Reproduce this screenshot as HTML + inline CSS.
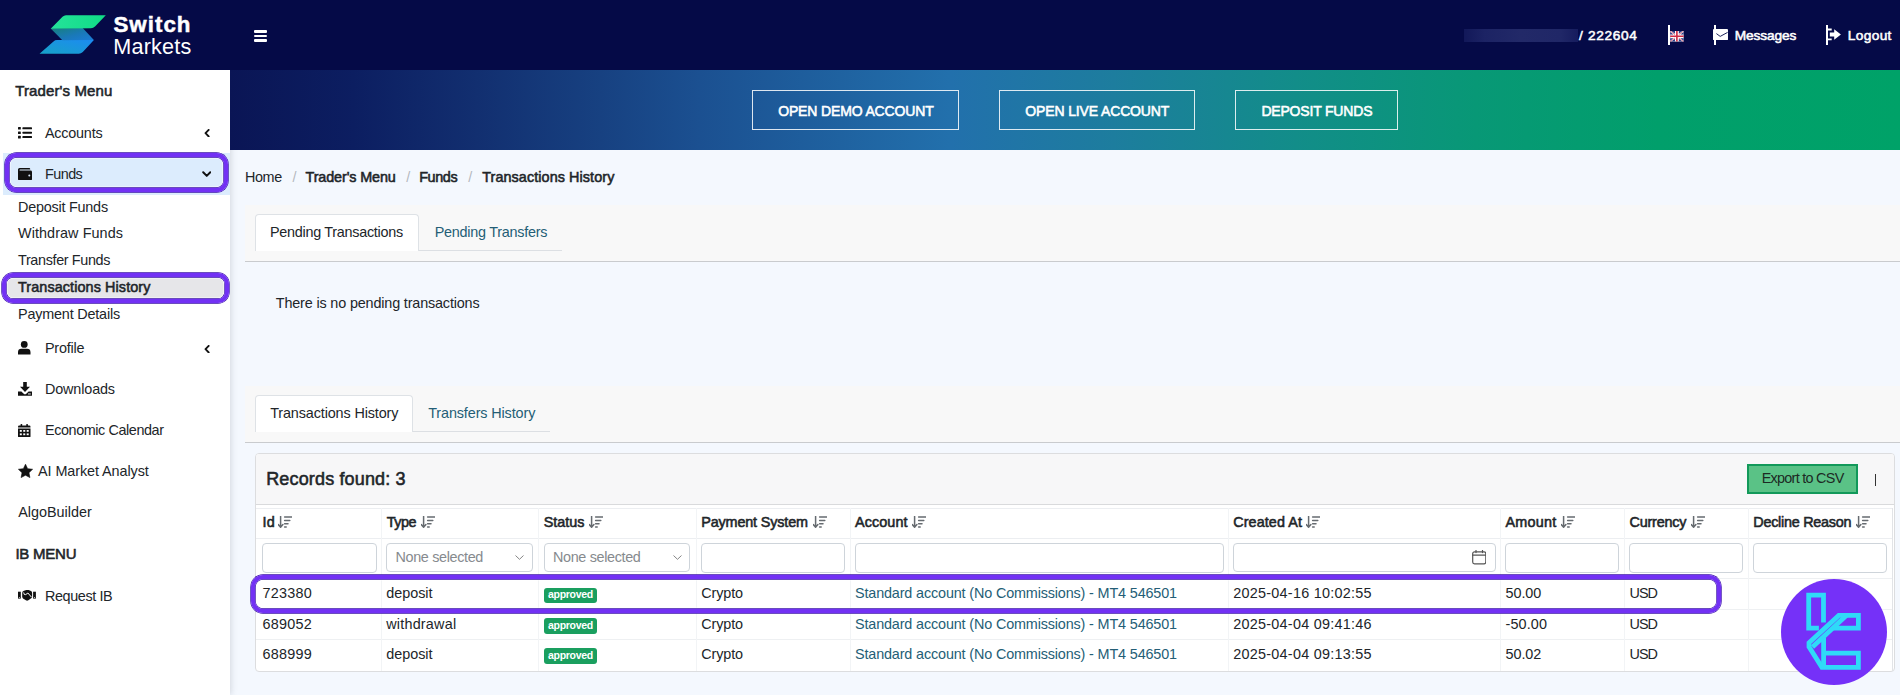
<!DOCTYPE html><html lang="en"><head><meta charset="utf-8"><title>Transactions History</title><style>
*{box-sizing:border-box;margin:0;padding:0}
html,body{width:1900px;height:695px;overflow:hidden}
body{position:relative;background:#f4f8fe;font-family:'Liberation Sans',sans-serif;color:#212529;font-size:14px}
.t{position:absolute;white-space:pre;display:block}
.abs{position:absolute}
.header{position:absolute;left:0;top:0;width:1900px;height:70px;background:#050a47}
.sidebar{position:absolute;left:0;top:70px;width:230px;height:625px;background:#fff;box-shadow:1px 0 6px rgba(90,100,110,.22)}
.banner{position:absolute;left:230px;top:70px;width:1670px;height:80px;background:linear-gradient(90deg,#0a1555 0%,#0c1e61 7.4%,#122f70 14.8%,#174181 22.2%,#1b5091 28.1%,#2270ac 43.1%,#1d7d9e 52.9%,#128d89 63.8%,#089876 74.6%,#019f6b 85.5%,#00a268 100%)}
.bbtn{position:absolute;top:20px;height:40px;border:1.5px solid rgba(255,255,255,.85)}
.hl{position:absolute;border:4.6px solid #7231f4;box-shadow:0 0 0 .7px #3a12a8,inset 0 0 0 .7px #3a12a8,inset 0 0 0 1.5px rgba(255,255,255,.8)}
.tab{position:absolute;background:#fff;border:1px solid #dee2e6;border-bottom:none;border-radius:4px 4px 0 0}
.hr{position:absolute;height:1px;background:#c9cbce}
.card{position:absolute;left:255px;top:453px;width:1640px;height:219px;background:#fff;border:1px solid #dcdddf;border-radius:4px;overflow:hidden}
.cardh{position:absolute;left:0;top:0;width:1638px;height:51px;background:#f7f7f8;border-bottom:1px solid #d9dadc}
.vl{position:absolute;width:1px;background:#f2f4f6;top:508px;height:163px}
.hl2{position:absolute;height:1px;background:#eceef1;left:256px;width:1636px}
.inp{position:absolute;background:#fff;border:1px solid #ced4da;border-radius:4px;top:543px;height:30px}
.sel{position:absolute;background:#fff;border:1px solid #ced4da;border-radius:4px;top:543px;height:28.5px}
.badge{position:absolute;background:#1a9f5f;border-radius:3px;width:53px;height:15px;left:544px}
</style></head><body>
<aside><nav>
<div class="sidebar"></div>
<span class="t" style="left:15.30px;top:82.80px;font-size:15px;line-height:15px;-webkit-text-stroke:0.55px currentColor;letter-spacing:0.105px;">Trader's Menu</span>
<svg class="abs" style="left:18px;top:127px" width="14" height="11.5" viewBox="0 0 14 11.5" ><g fill="#111"><rect x="0" y="0" width="2.8" height="2.6" rx=".5"/><rect x="0" y="4.4" width="2.8" height="2.6" rx=".5"/><rect x="0" y="8.8" width="2.8" height="2.6" rx=".5"/><rect x="4.4" y=".3" width="9.6" height="2" rx=".6"/><rect x="4.4" y="4.7" width="9.6" height="2" rx=".6"/><rect x="4.4" y="9.1" width="9.6" height="2" rx=".6"/></g></svg>
<span class="t" style="left:45.00px;top:125.80px;font-size:14.4px;line-height:14.4px;letter-spacing:-0.227px;">Accounts</span>
<svg class="abs" style="left:203.6px;top:128.8px" width="6" height="8.4" viewBox="0 0 6 9" ><path d="M4.8 1L1.4 4.5L4.8 8" fill="none" stroke="#111" stroke-width="2" stroke-linecap="round" stroke-linejoin="round"/></svg>
<div class="abs" style="left:3px;top:153.4px;width:227px;height:42px;background:#dcecfd"></div>
<div class="hl" style="left:4.9px;top:152.8px;width:223.2px;height:39.4px;border-radius:11.5px"></div>
<svg class="abs" style="left:18px;top:167.5px" width="14" height="12.5" viewBox="0 0 14 12.5" ><path d="M1.6 0H11.2Q12.2 0 12.2 1V1.6H2Q1.5 1.6 1.5 2.1Q1.5 2.6 2 2.6H12.6Q14 2.6 14 4V11Q14 12.5 12.6 12.5H1.6Q0 12.5 0 11V1.6Q0 0 1.6 0Z" fill="#111"/><circle cx="11.3" cy="7.6" r="1" fill="#dcecfd"/></svg>
<span class="t" style="left:45.00px;top:166.80px;font-size:14.4px;line-height:14.4px;letter-spacing:-0.556px;">Funds</span>
<svg class="abs" style="left:201.5px;top:170.5px" width="9.5" height="6.5" viewBox="0 0 9.5 6.5" ><path d="M1.2 1.3L4.75 4.9L8.3 1.3" fill="none" stroke="#111" stroke-width="2" stroke-linecap="round" stroke-linejoin="round"/></svg>
<span class="t" style="left:18.00px;top:199.80px;font-size:14.4px;line-height:14.4px;letter-spacing:-0.224px;">Deposit Funds</span>
<span class="t" style="left:18.00px;top:225.80px;font-size:14.4px;line-height:14.4px;letter-spacing:0.076px;">Withdraw Funds</span>
<span class="t" style="left:18.00px;top:252.80px;font-size:14.4px;line-height:14.4px;letter-spacing:-0.352px;">Transfer Funds</span>
<div class="abs" style="left:4px;top:275px;width:223px;height:26px;background:#e6e6e9;border-radius:9px"></div>
<div class="hl" style="left:1.9px;top:272.7px;width:227.4px;height:30.1px;border-radius:11px"></div>
<span class="t" style="left:18.00px;top:279.80px;font-size:14.4px;line-height:14.4px;-webkit-text-stroke:0.55px currentColor;letter-spacing:0.096px;">Transactions History</span>
<span class="t" style="left:18.00px;top:306.80px;font-size:14.4px;line-height:14.4px;letter-spacing:-0.192px;">Payment Details</span>
<svg class="abs" style="left:18px;top:341px" width="12.5" height="13.5" viewBox="0 0 12.5 13.5" ><circle cx="6.25" cy="3.4" r="3.4" fill="#111"/><path d="M0 13.5V11.2Q0 7.8 3.4 7.8H9.1Q12.5 7.8 12.5 11.2V13.5Z" fill="#111"/></svg>
<span class="t" style="left:45.00px;top:340.80px;font-size:14.4px;line-height:14.4px;letter-spacing:-0.230px;">Profile</span>
<svg class="abs" style="left:203.6px;top:344.6px" width="6" height="8.4" viewBox="0 0 6 9" ><path d="M4.8 1L1.4 4.5L4.8 8" fill="none" stroke="#111" stroke-width="2" stroke-linecap="round" stroke-linejoin="round"/></svg>
<svg class="abs" style="left:18px;top:382px" width="14" height="13.8" viewBox="0 0 14 13.8" ><path d="M5.2 0H8.8V4.8H12L7 10L2 4.8H5.2Z" fill="#111"/><path d="M0 9.4H3.4L5.7 11.7Q7 12.9 8.3 11.7L10.6 9.4H14V13.8H0Z" fill="#111"/><rect x="10" y="11.5" width="2.8" height=".9" fill="#fff"/></svg>
<span class="t" style="left:45.00px;top:381.60px;font-size:14.4px;line-height:14.4px;letter-spacing:-0.142px;">Downloads</span>
<svg class="abs" style="left:18px;top:423.7px" width="12.5" height="13.5" viewBox="0 0 12.5 13.5" ><path d="M0 4.4H12.5V12.2Q12.5 13.5 11.2 13.5H1.3Q0 13.5 0 12.2Z" fill="#111"/><path d="M0 3.6V2.8Q0 1.6 1.3 1.6H11.2Q12.5 1.6 12.5 2.8V3.6Z" fill="#111"/><rect x="2.6" y="0" width="1.6" height="2.6" rx=".5" fill="#111"/><rect x="8.3" y="0" width="1.6" height="2.6" rx=".5" fill="#111"/><g fill="#fff"><rect x="1.8" y="6" width="2" height="1.8"/><rect x="5.25" y="6" width="2" height="1.8"/><rect x="8.7" y="6" width="2" height="1.8"/><rect x="1.8" y="9.4" width="2" height="1.8"/><rect x="5.25" y="9.4" width="2" height="1.8"/><rect x="8.7" y="9.4" width="2" height="1.8"/></g></svg>
<span class="t" style="left:45.00px;top:422.80px;font-size:14.4px;line-height:14.4px;letter-spacing:-0.412px;">Economic Calendar</span>
<svg class="abs" style="left:18.3px;top:464.2px" width="15" height="14" viewBox="0 0 14.5 13.5" ><path d="M7.25 0.2L9.3 4.5L14.1 5.1L10.6 8.4L11.5 13.1L7.25 10.8L3 13.1L3.9 8.4L0.4 5.1L5.2 4.5Z" fill="#111" stroke="#111" stroke-width=".6" stroke-linejoin="round"/></svg>
<span class="t" style="left:38.00px;top:464.10px;font-size:14.4px;line-height:14.4px;letter-spacing:-0.072px;">AI Market Analyst</span>
<span class="t" style="left:18.20px;top:504.80px;font-size:14.4px;line-height:14.4px;letter-spacing:-0.010px;">AlgoBuilder</span>
<span class="t" style="left:15.40px;top:545.80px;font-size:15px;line-height:15px;-webkit-text-stroke:0.55px currentColor;letter-spacing:-0.233px;">IB MENU</span>
<svg class="abs" style="left:18px;top:590.3px" width="18" height="11" viewBox="0 0 18 11" ><rect x="0" y="1.7" width="2.8" height="6.9" fill="#111"/><rect x="15.1" y="1.7" width="2.8" height="6.9" fill="#111"/><path d="M4.2 3Q4.2 1.3 6 .7L8.4 0H10.6L13 .9Q14.1 1.5 14.1 3V6.6Q14.1 7.6 13.2 8.3L10.3 10.3Q9.1 11 7.9 10.3L5 8.4Q4.2 7.8 4.2 6.6Z" fill="#111"/><path d="M5.7 2.9Q5.9 5.4 7.7 4.6L9.9 3L13.2 6.8" fill="none" stroke="#fff" stroke-width="1" stroke-linecap="round"/><rect x=".9" y="7" width=".9" height=".8" fill="#fff"/><rect x="16.1" y="7" width=".9" height=".8" fill="#fff"/></svg>
<span class="t" style="left:45.00px;top:588.80px;font-size:14.4px;line-height:14.4px;letter-spacing:-0.390px;">Request IB</span>
</nav></aside>
<header>
<div class="header"></div>
<svg class="abs" style="left:39px;top:14px" width="68" height="41" viewBox="0 0 68 41" >
<defs>
<linearGradient id="g1" x1="0" y1="0" x2="1" y2="0"><stop offset="0" stop-color="#25e29a"/><stop offset="1" stop-color="#10dc86"/></linearGradient>
<linearGradient id="g2" x1="0" y1="0" x2="1" y2="1"><stop offset="0" stop-color="#16807c"/><stop offset=".55" stop-color="#1a79b8"/><stop offset="1" stop-color="#1b7cd8"/></linearGradient>
<linearGradient id="g3" x1="1" y1="0" x2="0" y2="1"><stop offset="0" stop-color="#1c8bf2"/><stop offset="1" stop-color="#17a2c6"/></linearGradient>
</defs>
<path d="M18 26H54.9L43.8 38Q42 39.8 39.8 39.8H0.5L14.5 27.4Q16 26 18 26Z" fill="url(#g3)"/>
<path d="M11.7 14.5L43.7 14.1L54.9 26L23.4 26.3Z" fill="url(#g2)"/>
<path d="M27 1.2H66.8L56 12.5Q54.3 14.3 52 14.3L11.7 14.7L23.5 2.8Q25 1.2 27 1.2Z" fill="url(#g1)"/>
</svg>
<span class="t" style="left:113.40px;top:14.15px;font-size:22.3px;line-height:22.3px;font-weight:700;color:#fff;letter-spacing:1.044px;-webkit-text-stroke:.5px #fff;">Switch</span>
<span class="t" style="left:113.30px;top:35.90px;font-size:21.6px;line-height:21.6px;color:#fff;letter-spacing:0.185px;">Markets</span>
<div class="abs" style="left:253.5px;top:30.2px;width:13.5px;height:2.5px;background:#fff;border-radius:1px"></div>
<div class="abs" style="left:253.5px;top:34.7px;width:13.5px;height:2.5px;background:#fff;border-radius:1px"></div>
<div class="abs" style="left:253.5px;top:39.2px;width:13.5px;height:2.5px;background:#fff;border-radius:1px"></div>
<div class="abs" style="left:1464px;top:29px;width:113.5px;height:12.8px;background:linear-gradient(90deg,#121859 0,#1c2364 18%,#222968 50%,#202767 85%,#161c5e 100%)"></div>
<span class="t" style="left:1579.00px;top:28.65px;font-size:13.7px;line-height:13.7px;color:#fff;-webkit-text-stroke:0.55px currentColor;letter-spacing:0.669px;">/ 222604</span>
<div class="abs" style="left:1667.9px;top:25.1px;width:2.1px;height:19.8px;background:#fff"></div>
<svg class="abs" style="left:1670px;top:31px" width="13.8" height="10.6" viewBox="0 0 14 11" ><rect width="14" height="11" fill="#fff"/><path d="M1.2 0L5 0L5 2.9ZM0 1L0 3.6L3.4 3.6ZM9 0L12.8 0L9 2.9ZM14 1L14 3.6L10.6 3.6ZM1.2 11L5 11L5 8.1ZM0 10L0 7.4L3.4 7.4ZM9 11L12.8 11L9 8.1ZM14 10L14 7.4L10.6 7.4Z" fill="#2a3a84"/><path d="M0 0L5 3.8M14 0L9 3.8M0 11L5 7.2M14 11L9 7.2" stroke="#d0405a" stroke-width=".7"/><path d="M7 0V11M0 5.5H14" stroke="#cf2a44" stroke-width="1.7"/></svg>
<svg class="abs" style="left:1713.2px;top:28.9px" width="15" height="11.2" viewBox="0 0 15 11.2" ><rect width="15" height="11.2" rx="1" fill="#fff"/><path d="M3.4 4.6L7.2 7.4L14.6 3.4" fill="none" stroke="#050a47" stroke-width=".9"/></svg>
<div class="abs" style="left:1714px;top:25.1px;width:2.1px;height:19.8px;background:#fff"></div>
<span class="t" style="left:1734.70px;top:28.65px;font-size:13.7px;line-height:13.7px;color:#fff;-webkit-text-stroke:0.55px currentColor;letter-spacing:-0.092px;">Messages</span>
<div class="abs" style="left:1825.8px;top:25.1px;width:2.2px;height:19.8px;background:#fff"></div>
<svg class="abs" style="left:1826px;top:28px" width="16" height="13" viewBox="0 0 16 13" ><path d="M2 .6H5.7V2.4H2ZM2 10.4H5.7V12.2H2Z" fill="#fff"/><path d="M3.8 4.5H8.2V1.3L14.9 6.5L8.2 11.7V8.4H3.8Z" fill="#fff"/></svg>
<span class="t" style="left:1847.80px;top:28.65px;font-size:13.7px;line-height:13.7px;color:#fff;-webkit-text-stroke:0.55px currentColor;letter-spacing:0.350px;">Logout</span>
</header>
<main>
<div class="banner">
<div class="bbtn" style="left:522px;width:207px"></div><div class="bbtn" style="left:769px;width:196px"></div><div class="bbtn" style="left:1005px;width:163px"></div>
</div>
<span class="t" style="left:778.20px;top:104.00px;font-size:14px;line-height:14px;color:#fff;-webkit-text-stroke:0.55px currentColor;letter-spacing:-0.146px;">OPEN DEMO ACCOUNT</span>
<span class="t" style="left:1025.30px;top:104.00px;font-size:14px;line-height:14px;color:#fff;-webkit-text-stroke:0.55px currentColor;letter-spacing:-0.137px;">OPEN LIVE ACCOUNT</span>
<span class="t" style="left:1261.40px;top:104.00px;font-size:14px;line-height:14px;color:#fff;-webkit-text-stroke:0.55px currentColor;letter-spacing:-0.185px;">DEPOSIT FUNDS</span>
<span class="t" style="left:245.00px;top:169.80px;font-size:14.4px;line-height:14.4px;letter-spacing:-0.397px;">Home</span>
<span class="t" style="left:292.50px;top:169.80px;font-size:14.4px;line-height:14.4px;color:#b4b9bf;">/</span>
<span class="t" style="left:305.50px;top:169.80px;font-size:14.4px;line-height:14.4px;-webkit-text-stroke:0.55px currentColor;letter-spacing:-0.120px;">Trader's Menu</span>
<span class="t" style="left:406.30px;top:169.80px;font-size:14.4px;line-height:14.4px;color:#b4b9bf;">/</span>
<span class="t" style="left:419.20px;top:169.80px;font-size:14.4px;line-height:14.4px;-webkit-text-stroke:0.55px currentColor;letter-spacing:-0.378px;">Funds</span>
<span class="t" style="left:468.30px;top:169.80px;font-size:14.4px;line-height:14.4px;color:#b4b9bf;">/</span>
<span class="t" style="left:482.20px;top:169.80px;font-size:14.4px;line-height:14.4px;-webkit-text-stroke:0.55px currentColor;letter-spacing:0.081px;">Transactions History</span>
<div class="abs" style="left:245px;top:205px;width:1655px;height:56.5px;background:#f8f8f8"></div>
<div class="hr" style="left:418px;top:250px;width:144px;background:#dcdfe3"></div>
<div class="tab" style="left:255px;top:213.5px;width:164px;height:37.5px"></div>
<span class="t" style="left:270.00px;top:224.80px;font-size:14.4px;line-height:14.4px;letter-spacing:-0.277px;">Pending Transactions</span>
<span class="t" style="left:434.70px;top:224.80px;font-size:14.4px;line-height:14.4px;color:#245e76;letter-spacing:-0.248px;">Pending Transfers</span>
<div class="hr" style="left:244.5px;top:261px;width:1656px"></div>
<span class="t" style="left:275.80px;top:295.80px;font-size:14.4px;line-height:14.4px;letter-spacing:-0.159px;">There is no pending transactions</span>
<div class="abs" style="left:245px;top:385.5px;width:1655px;height:57px;background:#f8f8f8"></div>
<div class="hr" style="left:412px;top:431px;width:138px;background:#dcdfe3"></div>
<div class="tab" style="left:255px;top:395px;width:158px;height:37px"></div>
<span class="t" style="left:270.20px;top:406.40px;font-size:14.4px;line-height:14.4px;letter-spacing:-0.124px;">Transactions History</span>
<span class="t" style="left:428.20px;top:406.40px;font-size:14.4px;line-height:14.4px;color:#245e76;letter-spacing:-0.116px;">Transfers History</span>
<div class="hr" style="left:244.5px;top:442px;width:1656px"></div>
<div class="card"><div class="cardh"></div></div>
<span class="t" style="left:266.20px;top:470.00px;font-size:18px;line-height:18px;-webkit-text-stroke:0.55px currentColor;letter-spacing:0.155px;">Records found: 3</span>
<div class="abs" style="left:1747px;top:464px;width:111px;height:30px;background:#5ac286;border:2px solid #12995a"></div>
<span class="t" style="left:1761.70px;top:470.60px;font-size:14.4px;line-height:14.4px;color:#1d2a24;letter-spacing:-0.719px;">Export to CSV</span>
<div class="abs" style="left:1874.5px;top:474px;width:1.3px;height:11.5px;background:#333"></div>
<div class="hl2" style="top:507.5px"></div><div class="hl2" style="top:538px"></div><div class="hl2" style="top:639px;background:#eef0f2"></div><div class="hl2" style="top:578px;background:#eef0f2"></div><div class="hl2" style="top:608.5px;background:#eef0f2"></div>
<div class="vl" style="left:380.7px"></div>
<div class="vl" style="left:538.2px"></div>
<div class="vl" style="left:696.2px"></div>
<div class="vl" style="left:849.5px"></div>
<div class="vl" style="left:1228px"></div>
<div class="vl" style="left:1500px"></div>
<div class="vl" style="left:1624.2px"></div>
<div class="vl" style="left:1748px"></div>
<div class="vl" style="left:1891.5px;background:#e2e4e7"></div>
<span class="t" style="left:262.50px;top:514.80px;font-size:14.4px;line-height:14.4px;-webkit-text-stroke:0.55px currentColor;letter-spacing:0.323px;">Id</span>
<svg class="abs" style="left:278.3px;top:515.5px" width="14" height="12" viewBox="0 0 14 12" ><path d="M2.6 0.3v10.6M0.3 8.6l2.3 2.6 2.3-2.6" fill="none" stroke="#666b70" stroke-width="1.5" stroke-linecap="round" stroke-linejoin="round"/><path d="M6.6 1h7M6.6 4.4h5.2M6.6 7.8h3.4M6.6 11h1.6" fill="none" stroke="#666b70" stroke-width="1.5" stroke-linecap="round"/></svg>
<span class="t" style="left:386.70px;top:514.80px;font-size:14.4px;line-height:14.4px;-webkit-text-stroke:0.55px currentColor;letter-spacing:-0.487px;">Type</span>
<svg class="abs" style="left:420.5px;top:515.5px" width="14" height="12" viewBox="0 0 14 12" ><path d="M2.6 0.3v10.6M0.3 8.6l2.3 2.6 2.3-2.6" fill="none" stroke="#666b70" stroke-width="1.5" stroke-linecap="round" stroke-linejoin="round"/><path d="M6.6 1h7M6.6 4.4h5.2M6.6 7.8h3.4M6.6 11h1.6" fill="none" stroke="#666b70" stroke-width="1.5" stroke-linecap="round"/></svg>
<span class="t" style="left:543.70px;top:514.80px;font-size:14.4px;line-height:14.4px;-webkit-text-stroke:0.55px currentColor;">Status</span>
<svg class="abs" style="left:589.2px;top:515.5px" width="14" height="12" viewBox="0 0 14 12" ><path d="M2.6 0.3v10.6M0.3 8.6l2.3 2.6 2.3-2.6" fill="none" stroke="#666b70" stroke-width="1.5" stroke-linecap="round" stroke-linejoin="round"/><path d="M6.6 1h7M6.6 4.4h5.2M6.6 7.8h3.4M6.6 11h1.6" fill="none" stroke="#666b70" stroke-width="1.5" stroke-linecap="round"/></svg>
<span class="t" style="left:701.20px;top:514.80px;font-size:14.4px;line-height:14.4px;-webkit-text-stroke:0.55px currentColor;letter-spacing:-0.147px;">Payment System</span>
<svg class="abs" style="left:812.5px;top:515.5px" width="14" height="12" viewBox="0 0 14 12" ><path d="M2.6 0.3v10.6M0.3 8.6l2.3 2.6 2.3-2.6" fill="none" stroke="#666b70" stroke-width="1.5" stroke-linecap="round" stroke-linejoin="round"/><path d="M6.6 1h7M6.6 4.4h5.2M6.6 7.8h3.4M6.6 11h1.6" fill="none" stroke="#666b70" stroke-width="1.5" stroke-linecap="round"/></svg>
<span class="t" style="left:855.00px;top:514.80px;font-size:14.4px;line-height:14.4px;-webkit-text-stroke:0.55px currentColor;letter-spacing:0.077px;">Account</span>
<svg class="abs" style="left:912px;top:515.5px" width="14" height="12" viewBox="0 0 14 12" ><path d="M2.6 0.3v10.6M0.3 8.6l2.3 2.6 2.3-2.6" fill="none" stroke="#666b70" stroke-width="1.5" stroke-linecap="round" stroke-linejoin="round"/><path d="M6.6 1h7M6.6 4.4h5.2M6.6 7.8h3.4M6.6 11h1.6" fill="none" stroke="#666b70" stroke-width="1.5" stroke-linecap="round"/></svg>
<span class="t" style="left:1233.20px;top:514.80px;font-size:14.4px;line-height:14.4px;-webkit-text-stroke:0.55px currentColor;letter-spacing:0.084px;">Created At</span>
<svg class="abs" style="left:1306.3px;top:515.5px" width="14" height="12" viewBox="0 0 14 12" ><path d="M2.6 0.3v10.6M0.3 8.6l2.3 2.6 2.3-2.6" fill="none" stroke="#666b70" stroke-width="1.5" stroke-linecap="round" stroke-linejoin="round"/><path d="M6.6 1h7M6.6 4.4h5.2M6.6 7.8h3.4M6.6 11h1.6" fill="none" stroke="#666b70" stroke-width="1.5" stroke-linecap="round"/></svg>
<span class="t" style="left:1505.50px;top:514.80px;font-size:14.4px;line-height:14.4px;-webkit-text-stroke:0.55px currentColor;letter-spacing:0.216px;">Amount</span>
<svg class="abs" style="left:1560.8px;top:515.5px" width="14" height="12" viewBox="0 0 14 12" ><path d="M2.6 0.3v10.6M0.3 8.6l2.3 2.6 2.3-2.6" fill="none" stroke="#666b70" stroke-width="1.5" stroke-linecap="round" stroke-linejoin="round"/><path d="M6.6 1h7M6.6 4.4h5.2M6.6 7.8h3.4M6.6 11h1.6" fill="none" stroke="#666b70" stroke-width="1.5" stroke-linecap="round"/></svg>
<span class="t" style="left:1629.50px;top:514.80px;font-size:14.4px;line-height:14.4px;-webkit-text-stroke:0.55px currentColor;letter-spacing:-0.212px;">Currency</span>
<svg class="abs" style="left:1690.6px;top:515.5px" width="14" height="12" viewBox="0 0 14 12" ><path d="M2.6 0.3v10.6M0.3 8.6l2.3 2.6 2.3-2.6" fill="none" stroke="#666b70" stroke-width="1.5" stroke-linecap="round" stroke-linejoin="round"/><path d="M6.6 1h7M6.6 4.4h5.2M6.6 7.8h3.4M6.6 11h1.6" fill="none" stroke="#666b70" stroke-width="1.5" stroke-linecap="round"/></svg>
<span class="t" style="left:1753.30px;top:514.80px;font-size:14.4px;line-height:14.4px;-webkit-text-stroke:0.55px currentColor;letter-spacing:-0.266px;">Decline Reason</span>
<svg class="abs" style="left:1856.3px;top:515.5px" width="14" height="12" viewBox="0 0 14 12" ><path d="M2.6 0.3v10.6M0.3 8.6l2.3 2.6 2.3-2.6" fill="none" stroke="#666b70" stroke-width="1.5" stroke-linecap="round" stroke-linejoin="round"/><path d="M6.6 1h7M6.6 4.4h5.2M6.6 7.8h3.4M6.6 11h1.6" fill="none" stroke="#666b70" stroke-width="1.5" stroke-linecap="round"/></svg>
<div class="sel" style="left:1233px;width:262.5px"></div>
<div class="inp" style="left:262px;width:114.5px"></div>
<div class="inp" style="left:700.7px;width:144.5px"></div>
<div class="inp" style="left:855px;width:369px"></div>
<div class="inp" style="left:1505px;width:114.3px"></div>
<div class="inp" style="left:1628.7px;width:114.3px"></div>
<div class="inp" style="left:1753.2px;width:134px"></div>
<div class="sel" style="left:385.7px;width:147.7px"></div>
<svg class="abs" style="left:514.7px;top:554.6px" width="9" height="5.5" viewBox="0 0 9 5.5" ><path d="M.8 .8L4.5 4.3L8.2 .8" fill="none" stroke="#858585" stroke-width="1" stroke-linecap="round" stroke-linejoin="round"/></svg>
<div class="sel" style="left:544.2px;width:146px"></div>
<svg class="abs" style="left:673.2px;top:554.6px" width="9" height="5.5" viewBox="0 0 9 5.5" ><path d="M.8 .8L4.5 4.3L8.2 .8" fill="none" stroke="#858585" stroke-width="1" stroke-linecap="round" stroke-linejoin="round"/></svg>
<span class="t" style="left:395.50px;top:549.80px;font-size:14.4px;line-height:14.4px;color:#868a8e;letter-spacing:-0.345px;">None selected</span>
<span class="t" style="left:553.00px;top:549.80px;font-size:14.4px;line-height:14.4px;color:#868a8e;letter-spacing:-0.345px;">None selected</span>
<svg class="abs" style="left:1471.7px;top:550px" width="14.5" height="14.5" viewBox="0 0 14.5 14.5" ><rect x=".7" y="1.8" width="13.1" height="12" rx="1.8" fill="none" stroke="#555" stroke-width="1.2"/><path d="M.7 5.2H13.8M4 .3V2.6M10.5 .3V2.6" stroke="#555" stroke-width="1.2" fill="none" stroke-linecap="round"/></svg>
<span class="t" style="left:262.50px;top:585.80px;font-size:14.4px;line-height:14.4px;letter-spacing:0.267px;">723380</span>
<span class="t" style="left:386.20px;top:585.80px;font-size:14.4px;line-height:14.4px;letter-spacing:-0.016px;">deposit</span>
<div class="badge" style="top:588px;height:14.8px"></div>
<span class="t" style="left:548.00px;top:589.05px;font-size:10.5px;line-height:10.5px;font-weight:700;color:#fff;letter-spacing:-0.302px;">approved</span>
<span class="t" style="left:701.20px;top:585.80px;font-size:14.4px;line-height:14.4px;letter-spacing:-0.107px;">Crypto</span>
<span class="t" style="left:855.00px;top:585.80px;font-size:14.4px;line-height:14.4px;color:#245e76;letter-spacing:-0.148px;">Standard account (No Commissions) - MT4 546501</span>
<span class="t" style="left:1233.20px;top:585.80px;font-size:14.4px;line-height:14.4px;letter-spacing:0.263px;">2025-04-16 10:02:55</span>
<span class="t" style="left:1505.50px;top:585.80px;font-size:14.4px;line-height:14.4px;letter-spacing:-0.048px;">50.00</span>
<span class="t" style="left:1629.50px;top:585.80px;font-size:14.4px;line-height:14.4px;letter-spacing:-0.956px;">USD</span>
<span class="t" style="left:262.50px;top:616.80px;font-size:14.4px;line-height:14.4px;letter-spacing:0.267px;">689052</span>
<span class="t" style="left:386.20px;top:616.80px;font-size:14.4px;line-height:14.4px;letter-spacing:0.212px;">withdrawal</span>
<div class="badge" style="top:618.2px;height:15.5px"></div>
<span class="t" style="left:548.00px;top:620.15px;font-size:10.5px;line-height:10.5px;font-weight:700;color:#fff;letter-spacing:-0.302px;">approved</span>
<span class="t" style="left:701.20px;top:616.80px;font-size:14.4px;line-height:14.4px;letter-spacing:-0.107px;">Crypto</span>
<span class="t" style="left:855.00px;top:616.80px;font-size:14.4px;line-height:14.4px;color:#245e76;letter-spacing:-0.148px;">Standard account (No Commissions) - MT4 546501</span>
<span class="t" style="left:1233.20px;top:616.80px;font-size:14.4px;line-height:14.4px;letter-spacing:0.263px;">2025-04-04 09:41:46</span>
<span class="t" style="left:1505.50px;top:616.80px;font-size:14.4px;line-height:14.4px;letter-spacing:0.125px;">-50.00</span>
<span class="t" style="left:1629.50px;top:616.80px;font-size:14.4px;line-height:14.4px;letter-spacing:-0.956px;">USD</span>
<span class="t" style="left:262.50px;top:646.80px;font-size:14.4px;line-height:14.4px;letter-spacing:0.267px;">688999</span>
<span class="t" style="left:386.20px;top:646.80px;font-size:14.4px;line-height:14.4px;letter-spacing:-0.016px;">deposit</span>
<div class="badge" style="top:648.2px;height:15.5px"></div>
<span class="t" style="left:548.00px;top:650.15px;font-size:10.5px;line-height:10.5px;font-weight:700;color:#fff;letter-spacing:-0.302px;">approved</span>
<span class="t" style="left:701.20px;top:646.80px;font-size:14.4px;line-height:14.4px;letter-spacing:-0.107px;">Crypto</span>
<span class="t" style="left:855.00px;top:646.80px;font-size:14.4px;line-height:14.4px;color:#245e76;letter-spacing:-0.148px;">Standard account (No Commissions) - MT4 546501</span>
<span class="t" style="left:1233.20px;top:646.80px;font-size:14.4px;line-height:14.4px;letter-spacing:0.263px;">2025-04-04 09:13:55</span>
<span class="t" style="left:1505.50px;top:646.80px;font-size:14.4px;line-height:14.4px;letter-spacing:-0.048px;">50.02</span>
<span class="t" style="left:1629.50px;top:646.80px;font-size:14.4px;line-height:14.4px;letter-spacing:-0.956px;">USD</span>
<div class="hl" style="left:250.7px;top:574.5px;width:1470.4px;height:38.0px;border-radius:12px"></div>
<svg class="abs" style="left:1781.2px;top:579px" width="106" height="106" viewBox="0 0 106 106" ><circle cx="53" cy="53" r="53" fill="#7531f8"/>
<g fill="none" stroke="#2fdaf8" stroke-width="4.8" stroke-linejoin="miter" stroke-linecap="butt">
<path d="M37.9 49.1 L27.7 49.1 L27.7 16.2 L42.5 16.2 L42.5 43.4"/>
<path d="M52.2 49.1 L77.4 49.1 L77.4 36.4 L57.8 36.4 L28.0 63.8 L28.0 67.7 L40.9 88.3 L77.4 88.3 L77.4 74.2 L42.6 74.2"/>
<path d="M42.6 88.3 L42.6 58.3"/>
<path d="M65.3 36.4 L31.5 68"/>
</g></svg>
</main>
</body></html>
